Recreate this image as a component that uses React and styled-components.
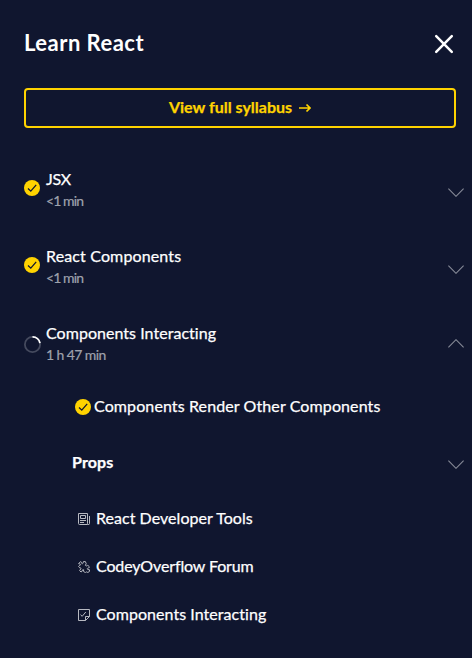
import React from "react";
import styled, { createGlobalStyle } from "styled-components";

const GlobalStyle = createGlobalStyle`
  * { box-sizing: border-box; }
  body {
    margin: 0;
    background: #10162f;
    color: #fff;
    font-family: Lato, "Open Sans", sans-serif;
  }
  svg { display: block; flex: none; }
`;

const Panel = styled.aside`
  width: 472px;
  height: 658px;
  overflow: hidden;
  background: #10162f;
`;

const Header = styled.header`
  display: flex;
  align-items: center;
  justify-content: space-between;
  height: 88px;
  padding: 0 18px 0 24px;
`;

const Title = styled.h1`
  margin: 0;
  padding-bottom: 3px;
  font-size: 22px;
  line-height: 30px;
  font-weight: 700;
  letter-spacing: 0.48px;
`;

const IconButton = styled.button`
  padding: 0;
  border: 0;
  background: none;
  color: inherit;
`;

const SyllabusButton = styled.button`
  display: flex;
  align-items: center;
  justify-content: center;
  gap: 7px;
  width: 432px;
  height: 40px;
  margin: 0 24px;
  padding: 0 0 2px;
  border: 2px solid #ffd300;
  border-radius: 4px;
  background: transparent;
  color: #ffd300;
  font: 700 16px/24px Lato, sans-serif;
  -webkit-text-stroke: 0.25px currentColor;

  svg {
    position: relative;
    top: 1px;
  }
`;

const Modules = styled.div`
  padding-top: 24px;
`;

const ModuleRow = styled.div`
  display: flex;
  height: 77px;
  padding: 15px 8px 0 24px;
`;

const Status = styled.div`
  width: 22px;
  padding-top: ${(p) => p.$top}px;
`;

const ModuleText = styled.div`
  flex: 1;
`;

const Label = styled.div`
  font-size: 16px;
  line-height: 24px;
  font-weight: ${(p) => (p.$bold ? 700 : 400)};
  letter-spacing: ${(p) => p.$spacing || 0}px;
  -webkit-text-stroke: 0.25px currentColor;
  white-space: nowrap;
`;

const Duration = styled.div`
  font-size: 14px;
  line-height: 19px;
  letter-spacing: ${(p) => p.$spacing || 0}px;
  color: #9fa2ac;
  -webkit-text-stroke: 0.2px currentColor;
`;

const Toggle = styled.div`
  padding-top: ${(p) => p.$top}px;
`;

const Lesson = styled.div`
  display: flex;
  align-items: center;
  height: ${(p) => p.$height}px;
  padding: 0 8px 0 ${(p) => p.$left}px;
  gap: ${(p) => p.$gap || 0}px;

  ${Label} {
    padding-bottom: 2px;
  }

  ${Toggle} {
    margin-left: auto;
  }
`;

function Done() {
  return (
    <svg width="16" height="16" viewBox="0 0 16 16">
      <circle cx="8" cy="8" r="8" fill="#ffd300" />
      <path d="M4 8.5 6.8 11.2 12.2 4.9" fill="none" stroke="#10162f" strokeWidth="1.25" />
    </svg>
  );
}

function Progress() {
  return (
    <svg width="18" height="18" viewBox="0 0 18 18" fill="none" strokeWidth="1.8">
      <circle cx="8.5" cy="8.5" r="7.6" stroke="#454a5e" />
      <path d="M8.5.9A7.6 7.6 0 0 1 16 7.2" stroke="#fff" />
    </svg>
  );
}

function Chevron({ up }) {
  return (
    <svg width="16" height="9" viewBox="0 0 16 9" fill="none" stroke="#868a97" strokeWidth="1.1">
      <path d={up ? "M.4 8.3 8 .7l7.6 7.6" : "M.4.7 8 8.3 15.6.7"} />
    </svg>
  );
}

function Close() {
  return (
    <svg width="20" height="20" viewBox="0 0 20 20" fill="none" stroke="#fff" strokeWidth="2.5" strokeLinecap="round">
      <path d="m2.2 2.2 15.6 15.6M17.8 2.2 2.2 17.8" />
    </svg>
  );
}

function Arrow() {
  return (
    <svg width="12" height="10" viewBox="0 0 12 10" fill="none" stroke="currentColor" strokeWidth="1.7">
      <path d="M0 5h11M7.5 1.5 11 5 7.5 8.5" />
    </svg>
  );
}

function ArticleIcon() {
  return (
    <svg width="12" height="12" viewBox="0 0 12 12" fill="none" stroke="#b7b9c1">
      <path d="M9.5 11.5h-8a1 1 0 0 1-1-1V.5h9v10a1 1 0 0 0 2 0V3M9.5 11.5h1" />
      <path d="M2.5 2.5h5v3h-5zM2 7.5h6M2 9.5h4" />
    </svg>
  );
}

function PuzzleIcon() {
  return (
    <svg width="12" height="12" viewBox="0 0 12 12" fill="none" stroke="#b7b9c1" strokeLinejoin="round">
      <path d="M.6 2.7 2.5.6l1 .7c-.5 1 .9 1.9 1.5 1L5.4.6h2l.8 2.1-.8 1.7c.7.8 1.7.6 2.4-.1l1.7 1.6-1 1.2c-1-.4-1.7.9-.8 1.4l1.8.3v1.6l-1.7 1.1-1.4-.7c-.7.7-.5 1.1-1.2.7l-1.8-1.2.3-1.5c-.9-.6-1.7.2-1.3 1.2L3 11 1.6 9.6 2.7 8c.6-.8-.1-1.5-1-1.2L.6 5.4l1.1-1.1c.8.2 1.2-.7.6-1.2z" />
    </svg>
  );
}

function QuizIcon() {
  return (
    <svg width="12" height="12" viewBox="0 0 12 12" fill="none" stroke="#b7b9c1">
      <path d="M.5.5h11v7l-4 4h-7zM7.5 11.5v-4h4M2.5 5.7l1.7 1.6L7.8 3" />
    </svg>
  );
}

const modules = [
  { name: "JSX", time: "<1 min", spacing: -0.3, timeSpacing: -0.9 },
  { name: "React Components", time: "<1 min", spacing: 0.14, timeSpacing: -0.9 },
  { name: "Components Interacting", time: "1 h 47 min", spacing: 0.04, timeSpacing: -0.6, open: true },
];

const resources = [
  { name: "React Developer Tools", Icon: ArticleIcon, spacing: 0.04 },
  { name: "CodeyOverflow Forum", Icon: PuzzleIcon, spacing: -0.13 },
  { name: "Components Interacting", Icon: QuizIcon, spacing: 0.05 },
];

export default function App() {
  return (
    <>
      <GlobalStyle />
      <Panel>
        <Header>
          <Title>Learn React</Title>
          <IconButton aria-label="Close"><Close /></IconButton>
        </Header>
        <SyllabusButton>View full syllabus <Arrow /></SyllabusButton>
        <Modules>
          {modules.map((m) => (
            <ModuleRow key={m.name}>
              <Status $top={m.open ? 15 : 13}>{m.open ? <Progress /> : <Done />}</Status>
              <ModuleText>
                <Label $spacing={m.spacing}>{m.name}</Label>
                <Duration $spacing={m.timeSpacing}>{m.time}</Duration>
              </ModuleText>
              <Toggle $top={m.open ? 18 : 21}><Chevron up={m.open} /></Toggle>
            </ModuleRow>
          ))}
        </Modules>
        <Lesson $height={48} $left={75} $gap={3}>
          <Done />
          <Label $spacing={0.11}>Components Render Other Components</Label>
        </Lesson>
        <Lesson $height={64} $left={72}>
          <Label $bold $spacing={0.1}>Props</Label>
          <Toggle $top={2}><Chevron /></Toggle>
        </Lesson>
        {resources.map(({ name, Icon, spacing }) => (
          <Lesson key={name} $height={48} $left={78} $gap={6}>
            <Icon />
            <Label $spacing={spacing}>{name}</Label>
          </Lesson>
        ))}
      </Panel>
    </>
  );
}
